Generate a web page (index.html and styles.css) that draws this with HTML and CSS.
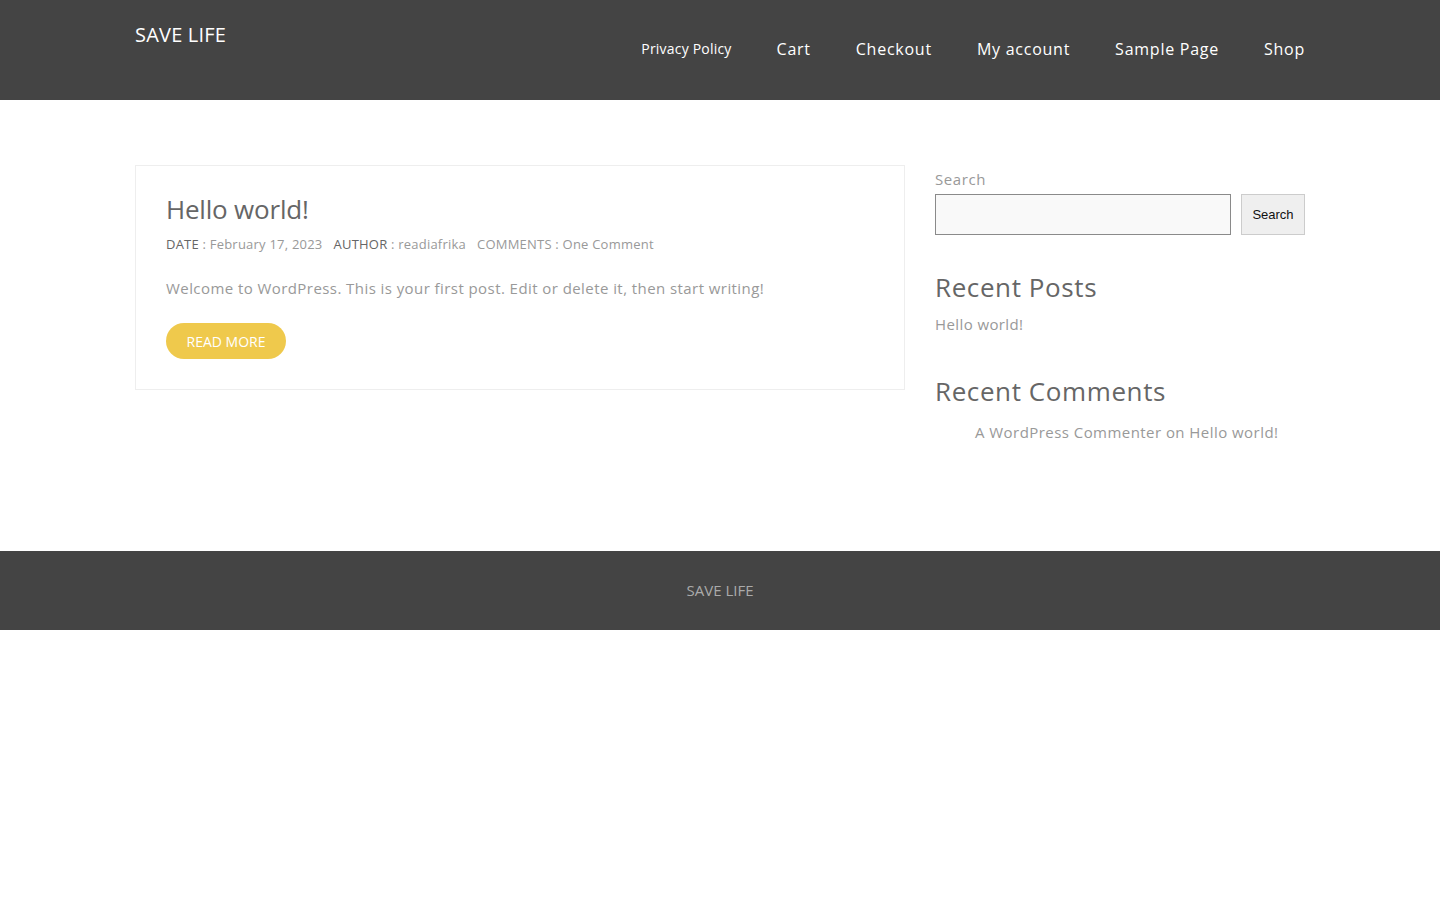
FILE: index.html
```html
<!DOCTYPE html>
<html lang="en">
<head>
<meta charset="utf-8">
<title>SAVE LIFE</title>
<link rel="stylesheet" href="styles.css">
</head>
<body>
<header class="site-header">
  <div class="container header-inner">
    <a class="logo" href="#">SAVE LIFE</a>
    <nav class="main-nav">
      <a class="nav-link small" href="#">Privacy Policy</a>
      <a class="nav-link" href="#">Cart</a>
      <a class="nav-link" href="#">Checkout</a>
      <a class="nav-link" href="#">My account</a>
      <a class="nav-link" href="#">Sample Page</a>
      <a class="nav-link" href="#">Shop</a>
    </nav>
  </div>
</header>
<main class="site-main">
  <div class="container content">
    <div class="posts">
      <article class="post-card">
        <h2 class="post-title">Hello world!</h2>
        <div class="post-meta">
          <span class="meta-item"><span class="meta-key">DATE</span> : February 17, 2023</span>
          <span class="meta-item"><span class="meta-key">AUTHOR</span> : readiafrika</span>
          <span class="meta-item">COMMENTS : One Comment</span>
        </div>
        <p class="post-excerpt">Welcome to WordPress. This is your first post. Edit or delete it, then start writing!</p>
        <a class="read-more" href="#">READ MORE</a>
      </article>
    </div>
    <aside class="sidebar">
      <div class="widget search-widget">
        <label class="search-label">Search</label>
        <div class="search-row">
          <input class="search-input" type="text">
          <button class="search-button">Search</button>
        </div>
      </div>
      <div class="widget">
        <h2 class="widget-title">Recent Posts</h2>
        <a class="widget-link" href="#">Hello world!</a>
      </div>
      <div class="widget">
        <h2 class="widget-title">Recent Comments</h2>
        <ul class="comment-list">
          <li>A WordPress Commenter on Hello world!</li>
        </ul>
      </div>
    </aside>
  </div>
</main>
<footer class="site-footer">
  <span class="footer-text">SAVE LIFE</span>
</footer>
</body>
</html>
```
FILE: styles.css
```css
* { box-sizing: border-box; }
body {
  margin: 0;
  font-family: "Open Sans", "DejaVu Sans", sans-serif;
  background: #fff;
  color: #999;
}
a { text-decoration: none; }
.container {
  width: 1170px;
  margin: 0 auto;
}
.site-header {
  background: #444444;
  height: 100px;
}
.header-inner {
  display: flex;
  justify-content: space-between;
  align-items: flex-start;
}
.logo {
  color: #fff;
  font-size: 20px;
  line-height: 24px;
  margin-top: 23px;
  letter-spacing: 0.2px;
}
.main-nav {
  display: flex;
  gap: 45px;
  align-items: center;
  margin-top: 37px;
  height: 24px;
}
.nav-link {
  color: #fff;
  font-size: 16px;
  line-height: 24px;
  letter-spacing: 0.75px;
}
.nav-link.small { font-size: 14px; letter-spacing: 0.2px; }
.site-main {
  min-height: 451px;
  padding-top: 65px;
}
.content {
  display: flex;
  gap: 30px;
  align-items: flex-start;
}
.posts { width: 770px; }
.post-card {
  border: 1px solid #eeeeee;
  padding: 25px 30px 30px;
}
.post-title {
  margin: 0;
  font-size: 26px;
  font-weight: 400;
  line-height: 36px;
  color: #666;
  letter-spacing: -0.2px;
}
.post-meta {
  margin-top: 7px;
  font-size: 13px;
  line-height: 20px;
  color: #999;
  display: flex;
  gap: 11px;
  letter-spacing: 0.22px;
}
.meta-key { color: #666; }
.post-excerpt {
  margin: 22px 0 0;
  font-size: 15px;
  line-height: 24px;
  color: #999;
  letter-spacing: 0.43px;
}
.read-more {
  display: inline-flex;
  align-items: center;
  justify-content: center;
  margin-top: 23px;
  width: 120px;
  height: 36px;
  border-radius: 18px;
  background: #efc94c;
  color: #fff;
  font-size: 14px;
}
.sidebar {
  width: 370px;
  padding-top: 4px;
}
.search-label {
  display: block;
  font-size: 15px;
  line-height: 20px;
  color: #999;
  margin-bottom: 5px;
  letter-spacing: 0.6px;
}
.search-row {
  display: flex;
  gap: 10px;
}
.search-input {
  width: 296px;
  height: 41px;
  border: 1px solid #8a8a8a;
  background: #f9f9f9;
  margin: 0;
  padding: 0 8px;
}
.search-button {
  width: 64px;
  height: 41px;
  border: 1px solid #cccccc;
  background: #efefef;
  font-family: "Liberation Sans", Arial, sans-serif;
  font-size: 13px;
  color: #111;
  padding: 0;
}
.widget-title {
  margin: 0;
  font-size: 26px;
  font-weight: 400;
  line-height: 34px;
  color: #666;
  letter-spacing: 0.6px;
}
.search-widget { margin-bottom: 35px; }
.widget-link {
  display: block;
  margin-top: 8px;
  font-size: 15px;
  line-height: 24px;
  color: #999;
  margin-bottom: 38px;
  letter-spacing: 0.4px;
}
.comment-list {
  margin: 12px 0 0;
  padding-left: 40px;
  list-style: none;
  font-size: 15px;
  line-height: 24px;
  color: #999;
  letter-spacing: 0.45px;
}
.site-footer {
  background: #444444;
  height: 79px;
  display: flex;
  align-items: center;
  justify-content: center;
}
.footer-text {
  color: #aaaaaa;
  font-size: 15px;
  line-height: 20px;
  margin-top: -2px;
}
```
